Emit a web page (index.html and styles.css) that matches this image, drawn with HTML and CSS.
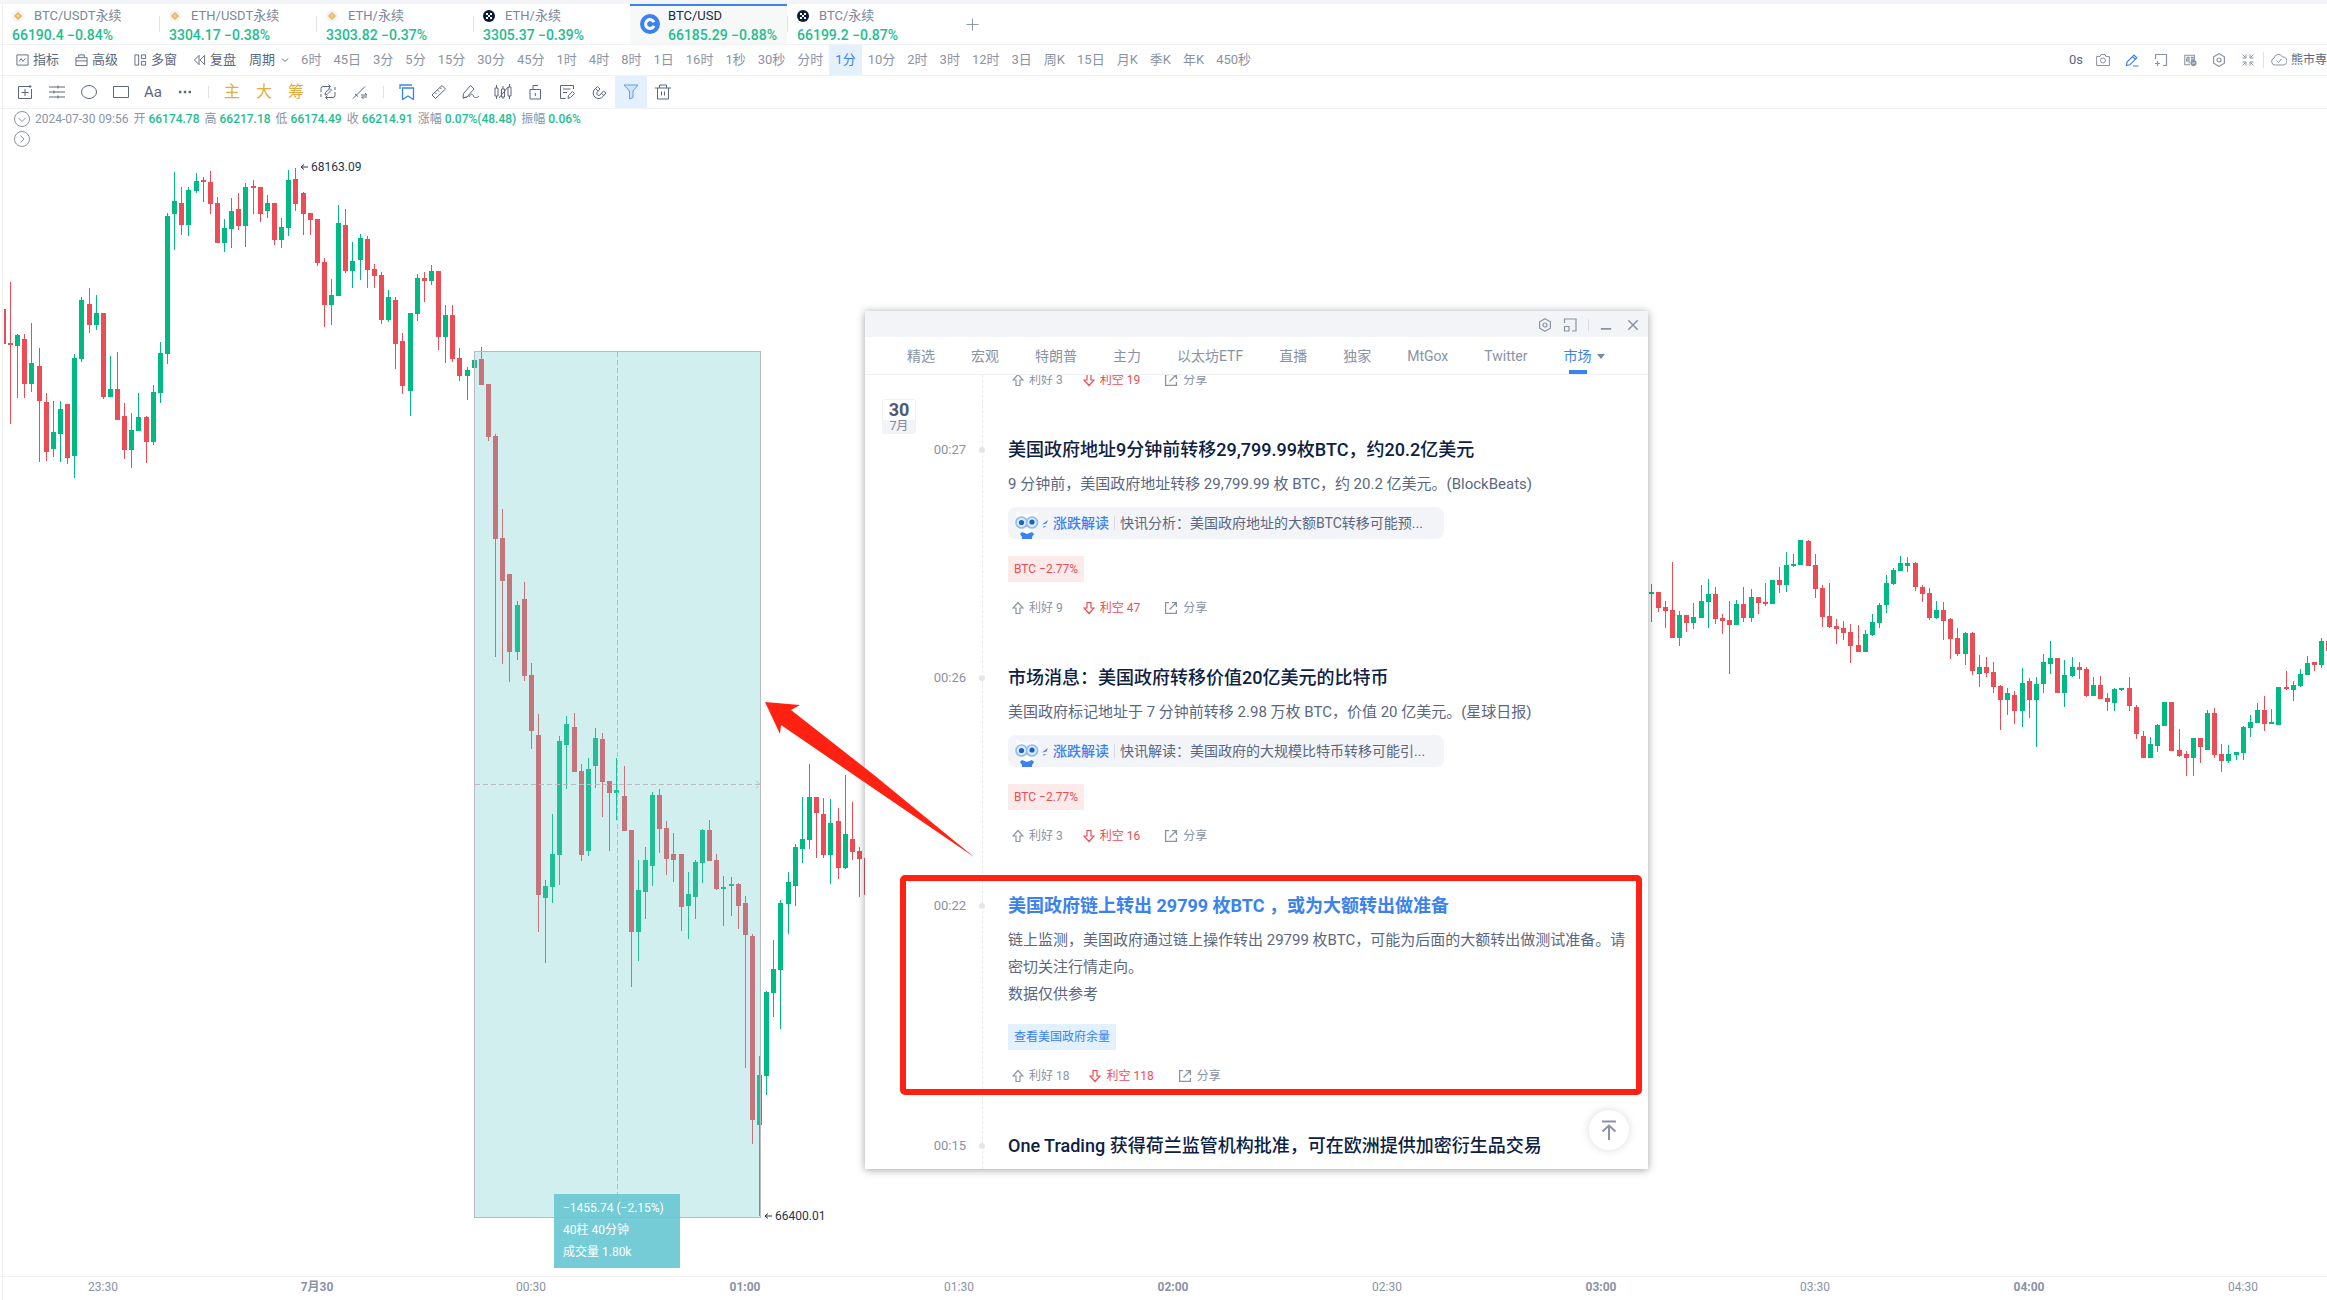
FILE: index.html
```html
<!DOCTYPE html>
<html lang="zh-CN">
<head>
<meta charset="utf-8">
<title>BTC/USD 1分</title>
<link rel="stylesheet" href="styles.css">
</head>
<body>
<svg class="defs" aria-hidden="true">
  <symbol id="i-binance" viewBox="0 0 12 12"><circle cx="6" cy="6" r="6" fill="#f3f3f3"/><path d="M6 2l4 4-4 4-4-4z" fill="#e6b45a"/><path d="M6 4.6L7.4 6 6 7.400 4.600 6z" fill="none" stroke="#fff" stroke-width=".6"/></symbol>
  <symbol id="i-okx" viewBox="0 0 12 12"><circle cx="6" cy="6" r="6" fill="#0b1c38"/><path d="M3 3h2v2H3zM7 3h2v2H7zM5 5h2v2H5zM3 7h2v2H3zM7 7h2v2H7z" fill="#fff"/></symbol>
  <symbol id="i-coin" viewBox="0 0 20 20"><circle cx="10" cy="10" r="10" fill="#3a82ee"/><path d="M14 8.200a4.400 4.400 0 1 0 0 3.600" fill="none" stroke="#fff" stroke-width="3"/></symbol>
  <symbol id="i-up" viewBox="0 0 12 14"><path d="M6 1.500L11 7H8v5.500H4V7H1z" fill="none" stroke="currentColor" stroke-width="1.200"/></symbol>
  <symbol id="i-down" viewBox="0 0 12 14"><path d="M6 12.500L1 7h3V1.500h4V7h3z" fill="none" stroke="currentColor" stroke-width="1.200"/></symbol>
  <symbol id="i-share" viewBox="0 0 14 14"><path d="M5 1.600H1.600v10.800h10.800V9M8 1.600h4.400V6M12.400 1.600L5.500 8.500" fill="none" stroke="currentColor" stroke-width="1.300"/></symbol>
  <symbol id="i-hex" viewBox="0 0 14 14"><path d="M7 .8l5.400 3v6.400L7 13.200l-5.400-3V3.800z" fill="none" stroke="currentColor" stroke-width="1.200"/><circle cx="7" cy="7" r="2" fill="none" stroke="currentColor" stroke-width="1.200"/></symbol>
  <symbol id="i-owl" viewBox="0 0 26 32"><path d="M2 4l5 3h11l6-3-1 9v7l-4 6H8l-4-5z" fill="#fff" opacity=".75"/><circle cx="7.500" cy="15.500" r="5.500" fill="#dcecff" stroke="#8bbcf5" stroke-width="1.600"/><circle cx="18" cy="15.500" r="5.500" fill="#dcecff" stroke="#8bbcf5" stroke-width="1.600"/><circle cx="7.500" cy="15.500" r="2.600" fill="#1e62c8"/><circle cx="18" cy="15" r="2.600" fill="#1e62c8"/><path d="M12 18l2 0-1 3z" fill="#f29a4b"/><path d="M8 25l5 2 5-2 2 2-2 3v2H8v-2l-2-3z" fill="#3a82ee"/></symbol>
  <symbol id="i-spark" viewBox="0 0 8 10"><path d="M1 6.500L7 2 5.500 5.500zM2 8.600l4-.6-3.500 1.800z" fill="#3a82ee"/></symbol>
</svg>
<div class="app">
  <div class="strip"></div>
  <nav class="symbols">
    <a class="symbol" href="#"><span class="name"><svg><use href="#i-binance"/></svg>BTC/USDT永续</span><span class="price">66190.4 −0.84%</span></a>
    <a class="symbol" href="#"><span class="name"><svg><use href="#i-binance"/></svg>ETH/USDT永续</span><span class="price">3304.17 −0.38%</span></a>
    <a class="symbol" href="#"><span class="name"><svg><use href="#i-binance"/></svg>ETH/永续</span><span class="price">3303.82 −0.37%</span></a>
    <a class="symbol" href="#"><span class="name"><svg><use href="#i-okx"/></svg>ETH/永续</span><span class="price">3305.37 −0.39%</span></a>
    <a class="symbol active" href="#"><svg class="coin"><use href="#i-coin"/></svg><span class="pair"><span class="name">BTC/USD</span><span class="price">66185.29 −0.88%</span></span></a>
    <a class="symbol" href="#"><span class="name"><svg><use href="#i-okx"/></svg>BTC/永续</span><span class="price">66199.2 −0.87%</span></a>
    <button class="add" aria-label="添加"><svg viewBox="0 0 14 14"><path d="M7 .5v13M.5 7h13" stroke="currentColor"/></svg></button>
  </nav>

  <div class="periodbar">
    <div class="features">
      <button><svg viewBox="0 0 14 14"><path d="M1 1.500h12v11H1zM3.500 8.500l2-3 2 3 2.500-3" fill="none" stroke="currentColor"/></svg>指标</button>
      <button><svg viewBox="0 0 14 14"><path d="M1 4.500h12v8.500H1zM1 8h12M4 4V1.500h6V4" fill="none" stroke="currentColor"/></svg>高级</button>
      <button><svg viewBox="0 0 14 14"><path d="M1 1.500h4v11H1zM8 1.500h4.500v4H8zM8 8.500h4.500v4H8z" fill="none" stroke="currentColor"/></svg>多窗</button>
      <button><svg viewBox="0 0 14 14"><path d="M6.500 2v10l-5-5zM12.500 2v10l-5-5z" fill="none" stroke="currentColor"/></svg>复盘</button>
      <button class="drop">周期<svg viewBox="0 0 8 8"><path d="M1 2.500l3 3 3-3" fill="none" stroke="currentColor"/></svg></button>
    </div>
    <div class="periods">
      <button>6时</button><button>45日</button><button>3分</button><button>5分</button><button>15分</button><button>30分</button><button>45分</button><button>1时</button><button>4时</button><button>8时</button><button>1日</button><button>16时</button><button>1秒</button><button>30秒</button><button>分时</button><button class="on">1分</button><button>10分</button><button>2时</button><button>3时</button><button>12时</button><button>3日</button><button>周K</button><button>15日</button><button>月K</button><button>季K</button><button>年K</button><button>450秒</button>
    </div>
    <div class="actions">
      <span class="count">0s</span>
      <button aria-label="截图"><svg viewBox="0 0 14 14"><path d="M.6 3.500H4l1-2h4l1 2h3.400v9H.6z" fill="none" stroke="currentColor"/><circle cx="7" cy="7.500" r="2.500" fill="none" stroke="currentColor"/></svg></button>
      <button class="blue" aria-label="画线"><svg viewBox="0 0 14 14"><path d="M1.500 12.500l.5-3.500L9 2l2.800 2.800-7 7zM7.500 3.500l2.800 2.800M8 13h5.500" fill="none" stroke="currentColor" stroke-width="1.200"/></svg></button>
      <button aria-label="新窗"><svg viewBox="0 0 14 14"><path d="M1.500 6V1.500h11v11H9M3.500 8v5M1 10.500h5" fill="none" stroke="currentColor" stroke-width="1.200"/></svg></button>
      <button aria-label="弹幕"><svg viewBox="0 0 16 14"><path d="M13 7V1.500H2v11h6M4 4h3v2H4v2h3v3M9 4h3M9 6h3v2H9" fill="none" stroke="currentColor" stroke-width="1.200"/><circle cx="12" cy="10.500" r="3.500" fill="currentColor"/><path d="M10.500 10.500h3" stroke="#fff"/></svg></button>
      <button aria-label="设置"><svg><use href="#i-hex"/></svg></button>
      <button aria-label="收起"><svg viewBox="0 0 14 14"><path d="M1.500 1.500l3 3M5 1.500V5H1.500M12.500 1.500l-3 3M9 1.500V5h3.500M1.500 12.500l3-3M5 12.500V9H1.500M12.500 12.500l-3-3M9 12.500V9h3.500" fill="none" stroke="currentColor"/></svg></button>
      <button class="layout"><svg viewBox="0 0 16 14"><path d="M4.500 12A3.500 3.500 0 0 1 3 5.200 4.500 4.500 0 0 1 11.500 4a4 4 0 0 1 .5 8zM5.500 7.500l2 2 3-3.500" fill="none" stroke="currentColor"/></svg>熊市専</button>
    </div>
  </div>

  <div class="drawbar">
    <button aria-label="十字"><svg viewBox="0 0 16 16"><path d="M1.500 2.500h10.500M14.500 5v9.500H1.500v-12M8 5v7M4.500 8.500h7M13 1v3M11.500 2.500h3"/></svg></button>
    <button aria-label="水平线"><svg viewBox="0 0 16 16"><path d="M0 3h16M0 8h16M0 13h16M9 1.500v3M5 6.500v3M9 11.500v3"/></svg></button>
    <button aria-label="圆"><svg viewBox="0 0 16 16"><ellipse cx="8" cy="8" rx="7.500" ry="6.500"/></svg></button>
    <button aria-label="矩形"><svg viewBox="0 0 16 16"><path d="M.5 2.500h15v11H.5z"/></svg></button>
    <button class="aa">Aa</button>
    <button aria-label="更多"><svg viewBox="0 0 16 16"><path d="M2 8h2.400M6.800 8h2.400M11.600 8H14" stroke-width="2.400"/></svg></button>
    <span class="rule"></span>
    <button class="gold">主</button><button class="gold">大</button><button class="gold">筹</button>
    <button aria-label="连续画"><svg viewBox="0 0 16 16"><path d="M1 8V4.500a2 2 0 0 1 2-2h7M8.500.5l2 2-2 2M15 8v3.500a2 2 0 0 1-2 2H6M7.500 15.500l-2-2 2-2M1 10v3M15 3v3M5 11l.5-2.500 4.500-4 1.500 1.500-4.500 4.500z"/></svg></button>
    <button aria-label="线段"><svg viewBox="0 0 16 16"><path d="M1 14.500l12-12M3 10l3 2.500M9 11h6l-2-2M15 13H9.500l2 2"/></svg></button>
    <span class="rule"></span>
    <button class="blue" aria-label="书签"><svg viewBox="0 0 16 16"><path d="M1 5V1h12M3.500 4h11v11.500L9 12l-5.500 3.500z" stroke-width="1.300"/></svg></button>
    <button aria-label="尺"><svg viewBox="0 0 16 16"><path d="M1 11L11 1.500l3.500 3.500-10 9.500zM4 8.500l1.500 1.500M6.500 6L8 7.500M9 3.500l1.500 1.500"/></svg></button>
    <button aria-label="画笔"><svg class="wide" viewBox="0 0 18 16"><path d="M1 14l.5-4.500L8.500 1.500l3.500 3.500-7 8zM1 14l4-1M7 13c2-4 3.500-3 4.500-1s3 2.500 5.500 0"/></svg></button>
    <button aria-label="K线"><svg class="wide" viewBox="0 0 18 16"><path d="M1 4h3v8H1zM2.500 1v3M2.500 12v3M7.500 5h3v8h-3zM9 2v3M9 13v2M14 3h3v9h-3zM15.500 0v3M15.500 12v3M5 14L14 3"/></svg></button>
    <button aria-label="锁"><svg viewBox="0 0 16 16"><path d="M3 5.500h10.500V15H3zM6 5V1.500h5M8.300 9v3"/></svg></button>
    <button aria-label="备注"><svg viewBox="0 0 16 16"><path d="M14.500 5V1.500H1.500v13h5M4 5h7.500M4 8.500h4M9 14.500l.5-3 4-4 2 2-4 4z"/></svg></button>
    <button aria-label="磁铁"><svg viewBox="0 0 16 16"><path d="M6.500 2.500L4 5a5.500 5.500 0 1 0 8 7.500l3-3.500-2.500-2-3.500 4a2 2 0 0 1-3-2.500L9 5zM4.500 4.500L7 7M10.500 9.500l2.500 2"/></svg></button>
    <button class="on" aria-label="筛选"><svg viewBox="0 0 16 16"><path d="M1 1h14l-5 6v6.500L6.500 15V7z" fill="#cfe4fd"/></svg></button>
    <button aria-label="删除"><svg viewBox="0 0 16 16"><path d="M0 4h16M4.500 4V1h7v3M2.500 4v11h11V4M6.500 7.500v4M9.500 7.500v4"/></svg></button>
  </div>

  <main class="pane">
    <svg class="chart" id="chart" role="img" aria-label="BTC/USD K线"></svg>
    <p class="quote"><svg class="round" viewBox="0 0 16 16"><circle cx="8" cy="8" r="7.500"/><path d="M4.500 7L8 10.500 11.500 7"/></svg>2024-07-30 09:56 <span>开 <b>66174.78</b></span><span>高 <b>66217.18</b></span><span>低 <b>66174.49</b></span><span>收 <b>66214.91</b></span><span>涨幅 <b>0.07%(48.48)</b></span><span>振幅 <b>0.06%</b></span></p>
    <p class="quote"><svg class="round" viewBox="0 0 16 16"><circle cx="8" cy="8" r="7.500"/><path d="M6.500 4.500L10 8l-3.500 3.500"/></svg></p>

    <span class="mark high"><svg viewBox="0 0 8 8"><path d="M8 4H1M4 1.500L1 4l3 2.500"/></svg>68163.09</span>
    <span class="mark low"><svg viewBox="0 0 8 8"><path d="M8 4H1M4 1.500L1 4l3 2.500"/></svg>66400.01</span>
    <div class="measure">−1455.74 (−2.15%)<br>40柱 40分钟<br>成交量 1.80k</div>

    <section class="news">
      <header class="titlebar">
        <button aria-label="设置"><svg><use href="#i-hex"/></svg></button>
        <button aria-label="弹出"><svg viewBox="0 0 14 14"><path d="M1.500 5V1h11.500v12H9M1.500 8.500H6V13H1.500z" fill="none" stroke="currentColor" stroke-width="1.200"/></svg></button>
        <span class="rule"></span>
        <button class="min" aria-label="最小化"><svg viewBox="0 0 14 14"><path d="M1 11.500h12" stroke="currentColor" stroke-width="2"/></svg></button>
        <button class="close" aria-label="关闭"><svg viewBox="0 0 14 14"><path d="M1.500 1.500l11 11M12.500 1.500l-11 11" stroke="currentColor" stroke-width="1.800"/></svg></button>
      </header>
      <nav class="topics">
        <a href="#">精选</a><a href="#">宏观</a><a href="#">特朗普</a><a href="#">主力</a><a href="#">以太坊ETF</a><a href="#">直播</a><a href="#">独家</a><a href="#">MtGox</a><a href="#">Twitter</a><a class="on" href="#">市场<i></i></a>
      </nav>
      <div class="feed">
        <div class="date"><b>30</b><span>7月</span></div>
        <article class="item first">
          <div class="body">
            <div class="votes"><button><svg><use href="#i-up"/></svg>利好 3</button><button class="bear"><svg><use href="#i-down"/></svg>利空 19</button><button class="share"><svg><use href="#i-share"/></svg>分享</button></div>
          </div>
        </article>
        <article class="item">
          <time>00:27</time><i class="dot"></i>
          <div class="body">
            <h2>美国政府地址9分钟前转移29,799.99枚BTC，约20.2亿美元</h2>
            <p>9 分钟前，美国政府地址转移 29,799.99 枚 BTC，约 20.2 亿美元。(BlockBeats)</p>
            <a class="insight" href="#"><svg class="owl"><use href="#i-owl"/></svg><svg class="spark"><use href="#i-spark"/></svg><b>涨跌解读</b><span>快讯分析：美国政府地址的大额BTC转移可能预...</span></a>
            <a class="tag" href="#">BTC −2.77%</a>
            <div class="votes"><button><svg><use href="#i-up"/></svg>利好 9</button><button class="bear"><svg><use href="#i-down"/></svg>利空 47</button><button class="share"><svg><use href="#i-share"/></svg>分享</button></div>
          </div>
        </article>
        <article class="item">
          <time>00:26</time><i class="dot"></i>
          <div class="body">
            <h2>市场消息：美国政府转移价值20亿美元的比特币</h2>
            <p>美国政府标记地址于 7 分钟前转移 2.98 万枚 BTC，价值 20 亿美元。(星球日报)</p>
            <a class="insight" href="#"><svg class="owl"><use href="#i-owl"/></svg><svg class="spark"><use href="#i-spark"/></svg><b>涨跌解读</b><span>快讯解读：美国政府的大规模比特币转移可能引...</span></a>
            <a class="tag" href="#">BTC −2.77%</a>
            <div class="votes"><button><svg><use href="#i-up"/></svg>利好 3</button><button class="bear"><svg><use href="#i-down"/></svg>利空 16</button><button class="share"><svg><use href="#i-share"/></svg>分享</button></div>
          </div>
        </article>
        <article class="item">
          <time>00:22</time><i class="dot"></i>
          <div class="body">
            <h2 class="hot">美国政府链上转出 29799 枚BTC ，或为大额转出做准备</h2>
            <p>链上监测，美国政府通过链上操作转出 29799 枚BTC，可能为后面的大额转出做测试准备。请密切关注行情走向。<br>数据仅供参考</p>
            <a class="tag info" href="#">查看美国政府余量</a>
            <div class="votes"><button><svg><use href="#i-up"/></svg>利好 18</button><button class="bear"><svg><use href="#i-down"/></svg>利空 118</button><button class="share"><svg><use href="#i-share"/></svg>分享</button></div>
          </div>
        </article>
        <article class="item">
          <time>00:15</time><i class="dot"></i>
          <div class="body"><h2>One Trading 获得荷兰监管机构批准，可在欧洲提供加密衍生品交易</h2></div>
        </article>
      </div>
      <button class="totop" aria-label="回到顶部"><svg viewBox="0 0 16 20"><path d="M1 1.500h14M8 20V6M1.500 11.500L8 5.500l6.500 6" fill="none" stroke="currentColor" stroke-width="2"/></svg></button>
    </section>
    <div class="frame"></div>
    <svg class="arrow" viewBox="0 0 209 155"><path d="M0 0L35 3 26 8 109 73 209 155 105 84 16 23 15 32z" fill="#ff2112"/></svg>
  </main>

  <footer class="axis"><span>23:30</span><b>7月30</b><span>00:30</span><b>01:00</b><span>01:30</span><b>02:00</b><span>02:30</span><b>03:00</b><span>03:30</span><b>04:00</b><span>04:30</span></footer>
</div>
<script src="chart.js"></script>
</body>
</html>
```
FILE: styles.css
```css
* { box-sizing: border-box; }
body { margin: 0; font: 13px/18px Roboto, "Noto Sans CJK SC", sans-serif; color: #5b6780; background: #fff; }
button { display: flex; align-items: center; justify-content: center; padding: 0; border: 0; background: none; font: inherit; color: inherit; white-space: nowrap; }
a { color: inherit; text-decoration: none; }
p, h2 { margin: 0; }
svg { flex: none; }
.defs { position: absolute; width: 0; height: 0; }
.app { position: relative; display: flex; flex-direction: column; min-height: 100vh; overflow: hidden; }
.app::before { content: ""; position: absolute; left: 2px; top: 4px; bottom: 0; width: 1px; background: #eceef0; }
.strip { height: 4px; background: #f2f4f7; }

.symbols { display: flex; height: 41px; padding-left: 2px; border-bottom: 1px solid #f0f1f2; }
.symbol { position: relative; display: flex; flex-direction: column; flex: 0 0 157px; padding: 3px 10px 0; }
.symbol + .symbol::before { content: ""; position: absolute; left: 0; top: 12px; height: 16px; width: 1px; background: #e1e3e7; }
.symbol .name { display: flex; align-items: center; gap: 10px; height: 18px; color: #7c879b; }
.symbol .name svg { width: 12px; height: 12px; }
.symbol .price { font-size: 14px; font-weight: 500; line-height: 20px; color: #1fbd8f; }
.symbol.active { flex-direction: row; gap: 8px; padding-top: 1px; border-top: 2px solid #3a82ee; background: #f6f9f8; }
.symbol.active::before { display: none; }
.pair { display: flex; flex-direction: column; white-space: nowrap; }
.symbol.active .name { color: #1b2a45; }
.symbol.active .coin { width: 20px; height: 20px; margin-top: 7px; }
.add { width: 28px; margin-left: 14px; color: #8791a3; }
.add svg { width: 13px; height: 13px; }

.periodbar { display: flex; align-items: stretch; height: 31px; border-bottom: 1px solid #f0f1f2; }
.features { display: flex; gap: 16px; padding-left: 16px; }
.features button { gap: 4px; }
.features svg { width: 13px; height: 14px; }
.features .drop { margin-left: -3px; }
.features .drop svg { width: 8px; height: 8px; margin-left: 2px; }
.periods { display: flex; padding-left: 6px; color: #8a93a5; }
.periods button { padding: 0 6px; }
.periods .on { background: #e5f0fd; color: #3a82ee; }
.actions { display: flex; align-items: center; gap: 15px; margin-left: auto; color: #8a93a5; }
.actions svg { width: 14px; height: 14px; }
.actions .count { margin-right: -2px; color: #5b6780; }
.actions .layout { gap: 4px; padding-left: 7px; border-left: 1px solid #dfe2e6; font-size: 12px; height: 16px; margin-left: -7px; color: #5b6780; }
.actions .layout svg { width: 16px; color: #8a93a5; }
.blue { color: #3a82ee; }

.drawbar { display: flex; height: 33px; padding-left: 9px; border-bottom: 1px solid #f0f1f2; }
.drawbar button { width: 32px; font-size: 15px; }
.drawbar svg { width: 16px; height: 16px; fill: none; stroke: currentColor; }
.drawbar .wide { width: 18px; }
.drawbar .blue { color: #3a82ee; }
.drawbar .gold { color: #e2ac45; font-size: 16px; }
.drawbar .on { background: #e5f0fd; color: #5d9cf2; }
.drawbar .rule { align-self: center; width: 1px; height: 12px; margin: 0 7px; background: #dfe3ea; }

.pane { position: relative; flex: 1; }
.chart { position: absolute; left: 0; top: 0; width: 100%; height: 100%; clip-path: inset(0 0 0 4px); }
.up { fill: #00b983; }
.dn { fill: #eb4d56; }
.range { fill: rgba(110, 203, 207, .31); stroke: #b8bbbf; }
.guide { stroke: #bdb9c4; stroke-dasharray: 5 3; fill: none; }
.quote { position: relative; display: flex; align-items: center; gap: 5px; height: 19px; padding-left: 14px; font-size: 12px; color: #8a93a5; }
.quote:first-of-type { height: 20px; }
.quote b { font-weight: 500; color: #1fbd8f; }
.round { width: 16px; height: 16px; fill: none; stroke: #8a93a5; }
.mark { position: absolute; display: flex; align-items: center; gap: 3px; font-size: 12px; color: #24344f; }
.mark svg { width: 8px; height: 8px; fill: none; stroke: currentColor; }
.high { left: 300px; top: 49px; }
.low { left: 764px; top: 1098px; }
.measure { position: absolute; left: 554px; top: 1085px; width: 126px; padding: 3px 9px 5px; font-size: 12px; line-height: 22px; color: #fff; background: rgba(103, 198, 209, .9); white-space: nowrap; }

.news { position: absolute; left: 865px; top: 202px; display: flex; flex-direction: column; width: 783px; height: 858px; background: #fff; box-shadow: 0 1px 8px rgba(40, 50, 60, .45); }
.titlebar { display: flex; align-items: center; justify-content: flex-end; gap: 11px; height: 26px; padding: 2px 9px 0 0; background: #f2f4f7; color: #8a93a5; }
.titlebar svg { width: 14px; height: 14px; }
.titlebar .rule { width: 1px; height: 12px; background: #dadde3; }
.titlebar .close { margin-left: 4px; }
.titlebar .min svg, .titlebar .close svg { width: 12px; height: 12px; }
.topics { display: flex; gap: 36px; height: 38px; padding-left: 42px; border-bottom: 1px solid #eff0f2; font-size: 14px; line-height: 38px; color: #8a93a5; white-space: nowrap; }
.topics .on { position: relative; color: #3a82ee; }
.topics .on::after { content: ""; position: absolute; left: 5px; bottom: 0; width: 18px; height: 4px; background: #3a82ee; }
.topics i { display: inline-block; margin: 0 0 2px 5px; border: 4px solid transparent; border-top: 5px solid #7c879b; border-bottom: 0; }
.feed { position: relative; flex: 1; min-height: 0; overflow: hidden; padding-right: 18px; }
.feed::before { content: ""; position: absolute; left: 117px; top: 0; bottom: 0; border-left: 1px dashed #e6e8eb; }
.date { position: absolute; left: 17px; top: 24px; width: 34px; border: 1px solid #f1f2f4; border-radius: 3px; text-align: center; background: #fff; }
.date b { display: block; font-size: 18px; line-height: 20px; color: #4d5a73; }
.date span { display: block; font-size: 12px; line-height: 13px; background: #f2f4f7; color: #7c879b; }
.item { display: grid; grid-template-columns: 101px 32px 1fr; margin-bottom: 47px; }
.item time { text-align: right; line-height: 26px; color: #8a93a5; }
.item .dot { justify-self: center; width: 6px; height: 6px; margin-top: 10px; border-radius: 50%; background: #e3e5e9; }
.item .body { grid-column: 3; display: flex; flex-direction: column; align-items: flex-start; padding-left: 10px; }
.item.first { margin-top: -5px; }
.item h2 { font-size: 18px; font-weight: 500; line-height: 26px; color: #0d2142; }
.item h2.hot { font-weight: 700; color: #3a82ee; }
.item p { margin-top: 8px; font-size: 15px; line-height: 27px; color: #5b6780; }
.insight { display: flex; align-items: center; width: 436px; height: 32px; margin-top: 9px; padding-left: 6px; border-radius: 8px; background: #f2f4f7; font-size: 14px; }
.owl { width: 26px; height: 32px; }
.spark { width: 8px; height: 10px; margin: 0 4px 0 1px; }
.insight b { padding-right: 5px; border-right: 1px solid #d7dbe1; font-weight: 500; line-height: 14px; color: #3a82ee; }
.insight span { margin-left: 5px; }
.tag { margin-top: 16px; padding: 0 6px; font-size: 12px; line-height: 26px; color: #eb4d56; background: #fdeaeb; }
.insight + .tag { margin-top: 17px; }
.tag.info { color: #3a82ee; background: #e3f0fd; }
.votes { display: flex; height: 20px; margin-top: 16px; padding-left: 4px; font-size: 12px; color: #8a93a5; }
.votes button { gap: 5px; }
.votes svg { width: 12px; height: 14px; }
.item.first .votes { margin-top: 0; }
.bear { margin-left: 20px; }
.votes .bear { color: #eb4d56; }
.votes .share { margin-left: 24px; }
.votes .share svg { width: 14px; }
.totop { position: absolute; right: 19px; bottom: 19px; width: 40px; height: 40px; border-radius: 50%; background: #fff; color: #8a93a5; box-shadow: 0 0 8px rgba(40, 50, 70, .18); }
.totop svg { width: 16px; height: 20px; }
.frame { position: absolute; left: 900px; top: 766px; width: 742px; height: 220px; border: 6px solid #ff2112; border-radius: 5px; pointer-events: none; }
.arrow { position: absolute; left: 765px; top: 593px; width: 209px; height: 155px; }

.axis { position: relative; display: flex; height: 24px; margin-left: -4px; border-top: 1px solid #f0f1f2; font-size: 12px; line-height: 21px; color: #8a93a5; }
.axis > * { flex: 0 0 214px; text-align: center; }
```
FILE: chart.js
```js
// Candles as colour,high,bodyTop,bodyBottom,low in page pixels; slots are one minute apart.
const TOP = 109, FIRST = 10.6, STEP = 7.133;

const left = `r,309,309,344,344
r,282,343,345,424 g,334,335,346,398 r,334,339,384,398 g,323,363,384,392 r,348,366,401,462
r,393,402,452,461 g,401,432,449,457 g,401,409,434,462 r,404,404,458,464 g,354,358,456,478
g,297,300,359,362 r,288,304,325,333 g,295,313,325,330 r,313,313,397,399 g,356,389,397,397
r,352,389,420,420 r,403,416,450,459 g,413,430,450,468 g,393,417,431,431 r,416,417,442,463
g,385,392,442,445 g,342,353,393,403 g,213,216,354,364 g,172,201,214,250 r,187,203,225,235
g,187,190,225,236 g,173,181,191,193 r,177,180,182,202 r,171,182,204,214 r,197,203,243,243
g,219,228,243,252 g,198,211,229,248 r,193,209,226,230 g,183,187,226,247 r,180,186,188,214
r,187,187,214,222 g,195,203,211,218 r,203,203,240,245 g,218,227,240,248 g,170,180,228,236
r,168,179,204,211 r,192,193,214,235 r,213,213,220,235 r,219,219,263,266 r,258,262,305,327
g,279,295,305,325 g,205,223,296,296 r,209,225,271,273 g,242,261,271,288 g,234,238,260,280
r,236,239,270,288 r,264,269,276,288 r,272,275,320,324 g,290,297,320,322 r,297,300,344,369
r,333,341,386,394 g,313,313,391,416 g,274,278,314,321 r,272,278,281,302 g,265,271,281,285
r,271,271,337,350 g,305,315,337,363 r,305,315,359,362 r,348,358,376,381 g,367,370,376,400
g,360,360,368,368 r,347,359,385,385 r,384,384,437,441 r,434,436,539,657 r,509,538,581,664
r,574,574,652,682 g,601,605,652,660 r,582,599,676,681 r,663,675,731,749 r,714,735,895,932
g,880,886,898,963 g,814,854,887,903 g,736,741,855,885 g,716,724,745,789 r,713,727,772,772
r,764,771,855,861 g,758,769,851,856 g,728,738,766,788 r,733,739,782,817 r,781,781,793,851
g,758,790,793,820 r,766,796,831,831 r,830,830,932,987 g,860,890,932,961 g,847,860,892,919
g,792,795,866,886 r,789,795,829,853 r,821,828,859,875 r,833,854,860,882 r,854,854,907,931
g,872,894,906,939 g,860,862,897,919 g,829,830,863,883 r,820,830,861,861 r,854,860,889,890
g,876,887,889,926 g,877,884,886,916 r,883,884,906,929 r,896,903,935,1068 r,934,936,1120,1144
g,1056,1075,1125,1216 g,991,992,1076,1095 g,940,969,993,1017 g,900,903,970,1029 g,872,882,904,934
g,844,847,886,906 g,797,839,849,863 g,764,797,840,849 r,797,797,813,858 r,798,814,855,858
g,799,823,855,884 r,808,821,868,879 g,775,834,868,869 r,802,839,852,860 r,847,851,859,897 r,858,858,895,895`;

const right = `g,584,592,594,622
r,592,592,608,612 r,601,607,611,628 r,562,610,638,638 g,611,615,638,646 r,615,615,623,632
g,603,617,623,629 g,585,601,618,618 g,579,594,602,628 r,587,594,619,624 r,614,618,621,634
r,601,620,625,674 g,600,604,625,625 r,587,604,618,622 g,589,597,618,622 r,597,597,603,614
r,583,602,604,606 g,580,580,604,604 r,567,580,585,593 g,552,565,585,592 g,554,564,566,567
g,540,540,565,565 r,540,541,566,566 r,554,565,589,598 r,585,588,617,627 r,583,616,627,628
r,619,626,629,644 r,621,628,633,640 r,624,632,646,663 r,625,645,652,652 g,630,634,652,652
g,614,622,635,636 g,603,605,623,628 g,575,583,605,613 g,568,570,584,585 g,556,563,571,571
g,557,563,566,572 r,562,563,587,591 r,585,587,594,602 r,588,593,618,620 g,601,610,618,619
r,602,610,621,640 r,618,619,639,659 r,628,638,654,656 g,632,633,654,665 r,632,633,671,675
g,655,667,674,687 r,657,667,673,677 r,662,672,687,693 r,685,686,700,730 g,688,693,700,715
r,691,695,711,724 g,668,683,711,727 r,678,681,700,718 g,677,684,700,747 g,654,662,684,693
g,641,658,664,674 r,658,658,693,693 g,660,675,693,707 g,657,667,676,677 r,662,667,670,679
r,667,669,696,697 g,677,685,696,696 r,676,685,699,699 r,693,698,702,711 g,688,689,703,711
g,688,688,690,691 r,677,688,706,711 r,705,707,734,739 r,731,736,758,758 g,737,744,758,758
g,724,725,746,752 g,702,702,726,726 r,702,702,751,751 r,729,750,756,757 r,751,754,758,776
g,738,738,758,776 r,738,738,747,763 g,710,713,750,750 r,708,713,755,758 r,744,754,761,772
g,745,754,761,763 g,752,752,755,760 g,726,727,753,760 g,715,722,728,737 g,703,710,723,723
r,696,710,724,731 g,709,722,724,724 g,687,687,725,725 r,671,687,689,690 g,681,685,690,701
g,669,674,686,687 g,656,663,675,675 r,662,662,665,671 g,638,641,665,668 r,641,641,651,651`;

function candles(data, slot) {
  return data.trim().split(/\s+/).map((row, n) => {
    const [color, ...v] = row.split(",");
    const [high, top, bottom, low] = v.map((y) => y - TOP);
    const x = Math.floor(FIRST + (slot + n) * STEP);
    const cls = color === "g" ? "up" : "dn";
    return `<rect class="${cls}" x="${x}" y="${high}" width="1" height="${low - high}"/>` +
      `<rect class="${cls}" x="${x - 2}" y="${top}" width="5" height="${Math.max(1, bottom - top)}"/>`;
  }).join("");
}

document.getElementById("chart").innerHTML =
  candles(left, -1) + candles(right, 230) +
  `<rect class="range" x="474.5" y="242.500" width="286" height="866"/>
   <path class="guide" d="M617.5 243V1107M475 675.5H760M756 671.5l4 4-4 4"/>`;
```
